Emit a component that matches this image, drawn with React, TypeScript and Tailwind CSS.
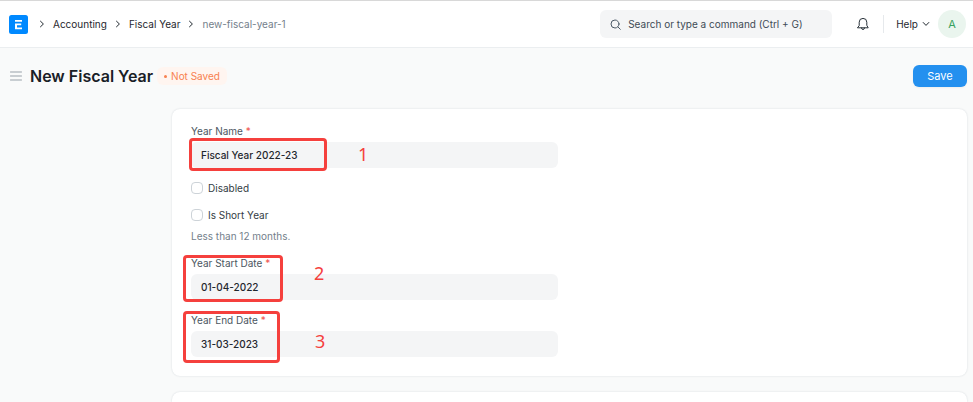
import React, { useState } from 'react';

interface FieldProps {
  id: string;
  label: string;
  value: string;
  onChange: (value: string) => void;
  children?: React.ReactNode;
}

const Field: React.FC<FieldProps> = ({ id, label, value, onChange, children }) => (
  <div className="relative flex flex-col gap-1">
    <label htmlFor={id} className="text-[10px] leading-[14px] text-[#4c5661]">
      {label} <span className="text-[#f0524d]">*</span>
    </label>
    <input
      id={id}
      type="text"
      required
      value={value}
      onChange={(e) => onChange(e.target.value)}
      className="h-[26px] w-full rounded-md bg-[#f4f5f6] px-[10px] text-[10px] font-medium text-[#1f272e] outline-none"
    />
    {children}
  </div>
);

interface CheckProps {
  id: string;
  label: string;
  checked: boolean;
  onChange: (checked: boolean) => void;
}

const Check: React.FC<CheckProps> = ({ id, label, checked, onChange }) => (
  <div className="flex h-[14px] items-center gap-[5px]">
    <input
      id={id}
      type="checkbox"
      checked={checked}
      onChange={(e) => onChange(e.target.checked)}
      className="size-3 appearance-none rounded-[4px] border border-[#cdd3d8] bg-white checked:bg-[#2490ef]"
    />
    <label htmlFor={id} className="text-[10px] leading-[14px] text-[#333c44]">
      {label}
    </label>
  </div>
);

const Chevron = ({ className }: { className: string }) => (
  <svg viewBox="0 0 8 8" fill="none" stroke="currentColor" strokeLinecap="round" strokeLinejoin="round" className={className}>
    <path d="M2.5 1.2 5.4 4 2.5 6.8" />
  </svg>
);

// Red callout frames and step numbers over the form
const frame = 'pointer-events-none absolute rounded-[4px] border-[3px] border-[#f5403d]';
const step = "pointer-events-none absolute font-['Noto_Sans',sans-serif] text-[18px] leading-5 text-[#f5403d]";

export default function App() {
  const [yearName, setYearName] = useState('Fiscal Year 2022-23');
  const [startDate, setStartDate] = useState('01-04-2022');
  const [endDate, setEndDate] = useState('31-03-2023');
  const [disabled, setDisabled] = useState(false);
  const [shortYear, setShortYear] = useState(false);

  return (
    <div className="flex h-screen flex-col overflow-hidden bg-[#f9fafa] font-['Inter',sans-serif] text-[#1f272e]">
      {/* Navbar */}
      <header className="flex h-12 shrink-0 items-center border-t border-b border-t-[#d8d8d8] border-b-[#ebeef0] bg-white pr-[7px] pl-[9px]">
        <a href="#home" aria-label="Home">
          <svg viewBox="0 0 19 19" className="size-[19px]">
            <rect width="19" height="19" rx="2.5" fill="#0089ff" />
            <path d="M6 5h7v1.7H6zM6 8.5h6.2v1.7H8v2.3h5v1.7H6z" fill="#fff" />
          </svg>
        </a>
        <nav className="ml-[10px] flex items-center gap-[7px] text-[10px]">
          <Chevron className="size-2" />
          <a href="#accounting">Accounting</a>
          <Chevron className="size-2" />
          <a href="#fiscal-year">Fiscal Year</a>
          <Chevron className="size-2" />
          <a href="#new" className="text-[#74808b]">new-fiscal-year-1</a>
        </nav>

        <div className="ml-auto flex items-center">
          <div className="flex h-7 w-[232px] items-center gap-[7px] rounded-md bg-[#f4f5f6] px-[10px]">
            <svg viewBox="0 0 11 11" fill="none" stroke="#4c5a67" strokeLinecap="round" className="size-[11px] shrink-0">
              <circle cx="5" cy="5" r="4" />
              <path d="m8 8 2.3 2.3" />
            </svg>
            <input
              type="text"
              aria-label="Search"
              placeholder="Search or type a command (Ctrl + G)"
              className="w-full min-w-0 bg-transparent text-[10px] outline-none placeholder:text-[#404b55]"
            />
          </div>
          <button type="button" aria-label="Notifications" className="ml-[25px]">
            <svg viewBox="0 0 12 14" fill="none" stroke="#29323a" strokeLinecap="round" strokeLinejoin="round" className="h-[14px] w-3">
              <path d="M2.2 8.3V5.2a3.8 3.8 0 0 1 7.6 0v3.1l1.4 2.5H.8zM4.5 11a1.5 1.5 0 0 0 3 0" />
            </svg>
          </button>
          <div className="mr-3 ml-[14px] h-[18px] w-px bg-[#e6e9ec]" />
          <button type="button" className="flex items-center gap-1 text-[10px]">
            Help
            <Chevron className="size-2 rotate-90" />
          </button>
          <button type="button" className="ml-2 size-7 rounded-full bg-[#eaf5ee] text-[11px] text-[#38a160]">
            A
          </button>
        </div>
      </header>

      {/* Page title */}
      <div className="flex h-14 shrink-0 items-center pr-[6px] pl-[10px]">
        <button type="button" aria-label="Toggle sidebar">
          <svg viewBox="0 0 12 10" stroke="#98a1a9" strokeLinecap="round" className="h-[10px] w-3">
            <path d="M.5 1h11M.5 5h11M.5 9h11" />
          </svg>
        </button>
        <h1 className="ml-2 text-[16px] font-semibold text-[#192027]">New Fiscal Year</h1>
        <span className="ml-1 flex h-[18px] items-center gap-1 rounded-md bg-[#fff5f0] px-[7px] text-[10px] text-[#f8814f]">
          <span className="size-[3px] rounded-full bg-[#f8814f]" />
          Not Saved
        </span>
        <button type="button" className="ml-auto h-[22px] w-[54px] rounded-md bg-[#2490ef] text-[11px] text-white shadow-xs">
          Save
        </button>
      </div>

      <main className="mt-[5px] mr-[6px] ml-[172px] flex flex-1 flex-col gap-4">
        <form className="grid shrink-0 grid-cols-2 gap-6 rounded-lg bg-white px-[19px] pt-[15px] pb-[19px] shadow-[0_0_2px_rgba(17,43,66,0.16)]">
          <div className="flex flex-col gap-[13px]">
            <Field id="year-name" label="Year Name" value={yearName} onChange={setYearName}>
              <span className={`${frame} top-[14px] -left-[2px] h-[33px] w-[138px]`} />
              <span className={`${step} top-[20px] left-[167px]`}>1</span>
            </Field>
            <Check id="disabled" label="Disabled" checked={disabled} onChange={setDisabled} />
            <div className="flex flex-col gap-[7px]">
              <Check id="short-year" label="Is Short Year" checked={shortYear} onChange={setShortYear} />
              <p className="text-[10px] leading-[14px] text-[#74808b]">Less than 12 months.</p>
            </div>
            <Field id="start-date" label="Year Start Date" value={startDate} onChange={setStartDate}>
              <span className={`${frame} -top-px -left-[8px] h-[47px] w-[100px]`} />
              <span className={`${step} top-[7px] left-[123px]`}>2</span>
            </Field>
            <Field id="end-date" label="Year End Date" value={endDate} onChange={setEndDate}>
              <span className={`${frame} -top-[2px] -left-[8px] h-[52px] w-[97px]`} />
              <span className={`${step} top-[18px] left-[124px]`}>3</span>
            </Field>
          </div>
        </form>
        <section className="flex-1 rounded-t-lg bg-white shadow-[0_0_2px_rgba(17,43,66,0.16)]" />
      </main>
    </div>
  );
}
